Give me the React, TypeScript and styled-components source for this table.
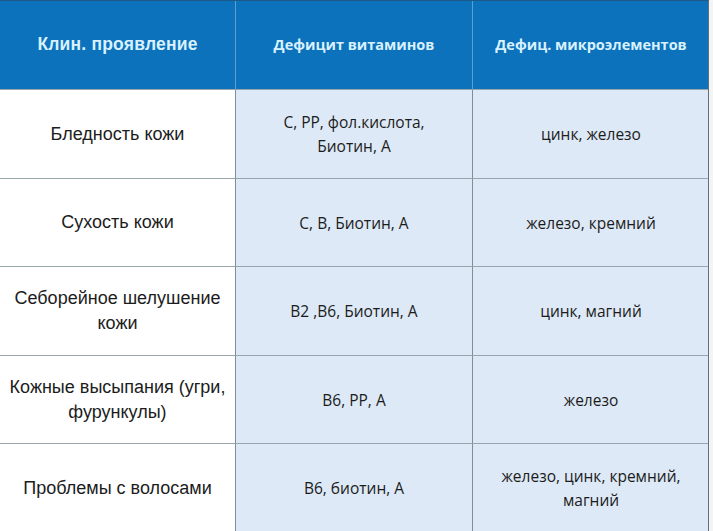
import styled, { createGlobalStyle } from "styled-components";
import { Fragment } from "react";

const Global = createGlobalStyle`
  html, body {
    margin: 0;
    padding: 0;
    background: #f4f4f4;
  }
`;

const Table = styled.div`
  width: 709px;
  height: 531px;
  display: grid;
  grid-template-columns: 235px 237px 237px;
  grid-template-rows: 88px 89px 88px 89px 88px 89px;
  background: #ffffff;
  border-right: 1px solid #5f6f7b;
  border-top: 1px solid #1d5a8a;
  box-sizing: border-box;
  overflow: hidden;
`;

const HeadCell = styled.div<{ $first?: boolean }>`
  background: #0b72bb;
  color: #d9f1ff;
  display: flex;
  align-items: center;
  justify-content: center;
  text-align: center;
  padding-bottom: 1px;
  box-sizing: border-box;
  border-left: ${(p) => (p.$first ? "none" : "1px solid #5f9fcf")};
  font-family: ${(p) =>
    p.$first ? '"Liberation Sans", Arial, sans-serif' : '"Open Sans", sans-serif'};
  font-weight: 700;
  font-size: ${(p) => (p.$first ? "17.5px" : "14.5px")};
  letter-spacing: ${(p) => (p.$first ? "0.2px" : "0")};
`;

const Cell = styled.div<{ $first?: boolean }>`
  background: ${(p) => (p.$first ? "#ffffff" : "#dde9f6")};
  color: #1c1c1c;
  display: flex;
  align-items: center;
  justify-content: center;
  text-align: center;
  box-sizing: border-box;
  border-top: 1px solid #9aa6ae;
  border-left: ${(p) => (p.$first ? "none" : "1px solid #7f8f99")};
  padding: 0 8px;
  font-family: ${(p) =>
    p.$first ? '"Liberation Sans", Arial, sans-serif' : '"Open Sans", sans-serif'};
  font-size: ${(p) => (p.$first ? "18px" : "15.5px")};
  line-height: ${(p) => (p.$first ? "25px" : "24px")};
`;

const rows: [string, string, string][] = [
  ["Бледность кожи", "C, PP, фол.кислота,\nБиотин, А", "цинк, железо"],
  ["Сухость кожи", "C, B, Биотин, А", "железо, кремний"],
  ["Себорейное шелушение\nкожи", "B2 ,B6, Биотин, А", "цинк, магний"],
  ["Кожные высыпания (угри,\nфурункулы)", "B6, PP, A", "железо"],
  ["Проблемы с волосами", "B6, биотин, А", "железо, цинк, кремний,\nмагний"],
];

const Lines = ({ text }: { text: string }) => (
  <span>
    {text.split("\n").map((l, i) => (
      <Fragment key={i}>
        {i > 0 && <br />}
        {l}
      </Fragment>
    ))}
  </span>
);

export default function App() {
  return (
    <>
      <Global />
      <Table>
        <HeadCell $first>Клин. проявление</HeadCell>
        <HeadCell>Дефицит витаминов</HeadCell>
        <HeadCell>Дефиц. микроэлементов</HeadCell>
        {rows.map((r, i) => (
          <Fragment key={i}>
            <Cell $first>
              <Lines text={r[0]} />
            </Cell>
            <Cell>
              <Lines text={r[1]} />
            </Cell>
            <Cell>
              <Lines text={r[2]} />
            </Cell>
          </Fragment>
        ))}
      </Table>
    </>
  );
}
